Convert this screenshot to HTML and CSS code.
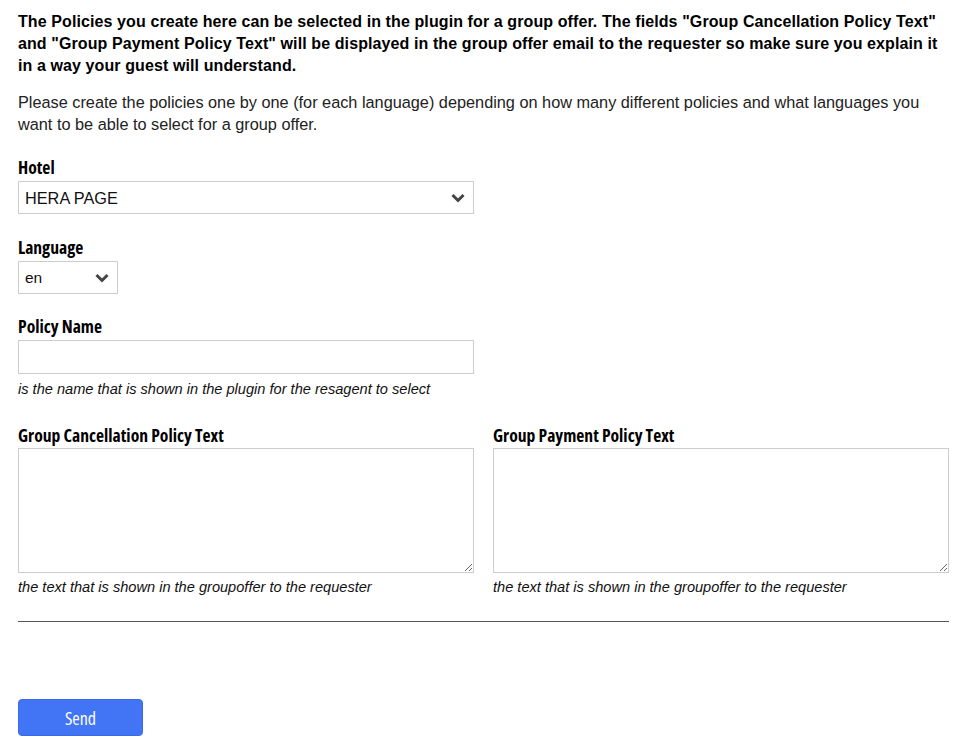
FILE: index.html
```html
<!DOCTYPE html>
<html lang="en">
<head>
<meta charset="utf-8">
<title>Group Policies</title>
<link rel="stylesheet" href="styles.css">
</head>
<body>
<div class="page">
  <p class="intro-bold">The Policies you create here can be selected in the plugin for a group offer. The fields "Group Cancellation Policy Text" and "Group Payment Policy Text" will be displayed in the group offer email to the requester so make sure you explain it in a way your guest will understand.</p>
  <p class="intro">Please create the policies one by one (for each language) depending on how many different policies and what languages you want to be able to select for a group offer.</p>

  <div class="field field-first">
    <label class="label" for="hotel">Hotel</label>
    <div class="select-wrap select-wide">
      <select id="hotel" class="select"><option>HERA PAGE</option></select>
      <svg class="chev" width="14" height="10" viewBox="0 0 14 10"><path d="M1.5 2 L7 7.5 L12.5 2" fill="none" stroke="#444" stroke-width="3"/></svg>
    </div>
  </div>

  <div class="field">
    <label class="label" for="lang">Language</label>
    <div class="select-wrap select-small">
      <select id="lang" class="select"><option>en</option></select>
      <svg class="chev" width="14" height="10" viewBox="0 0 14 10"><path d="M1.5 2 L7 7.5 L12.5 2" fill="none" stroke="#444" stroke-width="3"/></svg>
    </div>
  </div>

  <div class="field field-name">
    <label class="label" for="pname">Policy Name</label>
    <input id="pname" class="input" type="text">
    <div class="hint">is the name that is shown in the plugin for the resagent to select</div>
  </div>

  <div class="cols">
    <div class="col">
      <label class="label" for="cancel">Group Cancellation Policy Text</label>
      <textarea id="cancel" class="textarea"></textarea>
      <div class="hint">the text that is shown in the groupoffer to the requester</div>
    </div>
    <div class="col">
      <label class="label" for="pay">Group Payment Policy Text</label>
      <textarea id="pay" class="textarea"></textarea>
      <div class="hint">the text that is shown in the groupoffer to the requester</div>
    </div>
  </div>

  <hr class="rule">

  <button class="send" type="button">Send</button>
</div>
</body>
</html>
```

FILE: styles.css
```css
html, body {
  margin: 0;
  padding: 0;
  background: #fff;
}
body {
  font-family: "Liberation Sans", Arial, sans-serif;
  color: #111;
}
.page {
  padding: 11px 13px 0 18px;
}
.intro-bold {
  margin: 0;
  font-weight: bold;
  font-size: 16px;
  letter-spacing: 0.1px;
  line-height: 22px;
  color: #000;
}
.intro {
  margin: 14px 0 0 0;
  font-size: 16.3px;
  line-height: 22px;
  color: #222;
}
.field {
  margin-top: 22px;
  display: flex;
  flex-direction: column;
  align-items: flex-start;
}
.field-first {
  margin-top: 21px;
}
.field-name {
  margin-top: 21px;
}
.label {
  font-family: "Open Sans", sans-serif;
  font-stretch: 75%;
  font-weight: 700;
  font-size: 17.6px;
  line-height: 22px;
  color: #000;
  margin-bottom: 3px;
}
.select-wrap {
  position: relative;
}
.select-wide { width: 456px; }
.select-small { width: 100px; }
.select {
  appearance: none;
  -webkit-appearance: none;
  width: 100%;
  height: 33px;
  box-sizing: border-box;
  border: 1px solid #ccc;
  border-radius: 0;
  background: #fff;
  font-family: "Liberation Sans", Arial, sans-serif;
  font-size: 16.3px;
  color: #111;
  padding: 0 30px 0 6px;
  margin: 0;
}
.select-small .select { font-size: 15.5px; }
.chev {
  position: absolute;
  right: 9px;
  top: 12px;
  pointer-events: none;
}
.input {
  width: 456px;
  height: 34px;
  box-sizing: border-box;
  border: 1px solid #ccc;
  margin: 0;
  padding: 0 6px;
  font-size: 16px;
}
.hint {
  font-style: italic;
  font-size: 14.6px;
  line-height: 18px;
  color: #111;
  margin-top: 6px;
}
.cols {
  margin-top: 26px;
  display: grid;
  grid-template-columns: 456px 456px;
  column-gap: 19px;
}
.col {
  display: flex;
  flex-direction: column;
  align-items: flex-start;
}
.cols .label {
  margin-bottom: 2px;
}
.textarea {
  width: 456px;
  height: 125px;
  box-sizing: border-box;
  border: 1px solid #ccc;
  margin: 0;
  padding: 4px;
  resize: vertical;
  font-family: "Liberation Sans", Arial, sans-serif;
  font-size: 14px;
}
.cols .hint {
  margin-top: 5px;
}
.rule {
  margin: 25px 0 0 0;
  border: 0;
  border-top: 1px solid #555;
  width: 931px;
}
.send {
  margin-top: 77px;
  width: 125px;
  height: 37px;
  background: #4274f6;
  border: 1px solid #3a6ae8;
  border-radius: 4px;
  color: #fff;
  font-family: "Open Sans", sans-serif;
  font-stretch: 75%;
  font-size: 18px;
  font-weight: 400;
  padding: 0;
  cursor: pointer;
}
```
